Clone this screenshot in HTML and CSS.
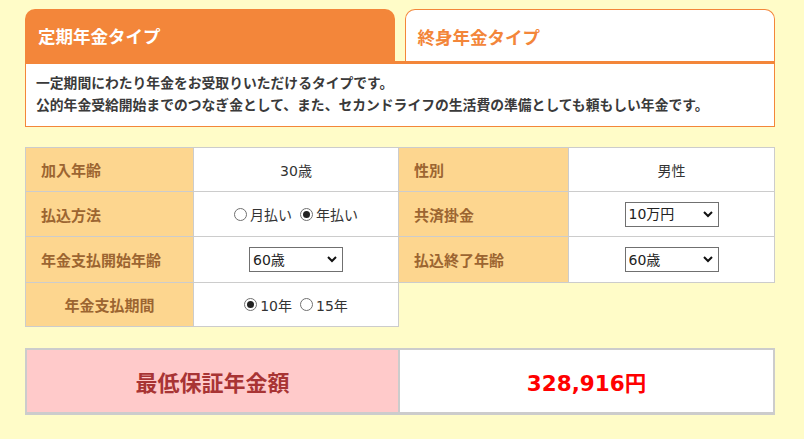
FILE: index.html
```html
<!DOCTYPE html>
<html lang="ja">
<head>
<meta charset="utf-8">
<title>年金シミュレーション</title>
<link rel="stylesheet" href="styles.css">
</head>
<body>
<div class="page">
  <div class="tabs">
    <div class="tab tab-active">定期年金タイプ</div>
    <div class="tab tab-idle">終身年金タイプ</div>
  </div>
  <div class="desc">
    <p>一定期間にわたり年金をお受取りいただけるタイプです。</p>
    <p>公的年金受給開始までのつなぎ金として、また、セカンドライフの生活費の準備としても頼もしい年金です。</p>
  </div>

  <div class="form-grid">
    <div class="cell label first">加入年齢</div>
    <div class="cell value">30歳</div>
    <div class="cell label">性別</div>
    <div class="cell value">男性</div>

    <div class="cell label first">払込方法</div>
    <div class="cell value">
      <label class="opt"><input type="radio" name="pay" class="radio">月払い</label>
      <label class="opt"><input type="radio" name="pay" class="radio" checked>年払い</label>
    </div>
    <div class="cell label">共済掛金</div>
    <div class="cell value">
      <span class="sel-wrap">
        <select class="sel"><option>10万円</option></select>
        <svg class="chev" width="10" height="7" viewBox="0 0 10 7"><path d="M1 1 L5 5 L9 1" fill="none" stroke="#111" stroke-width="2"/></svg>
      </span>
    </div>

    <div class="cell label first">年金支払開始年齢</div>
    <div class="cell value">
      <span class="sel-wrap">
        <select class="sel"><option>60歳</option></select>
        <svg class="chev" width="10" height="7" viewBox="0 0 10 7"><path d="M1 1 L5 5 L9 1" fill="none" stroke="#111" stroke-width="2"/></svg>
      </span>
    </div>
    <div class="cell label">払込終了年齢</div>
    <div class="cell value">
      <span class="sel-wrap">
        <select class="sel"><option>60歳</option></select>
        <svg class="chev" width="10" height="7" viewBox="0 0 10 7"><path d="M1 1 L5 5 L9 1" fill="none" stroke="#111" stroke-width="2"/></svg>
      </span>
    </div>

    <div class="cell label first center">年金支払期間</div>
    <div class="cell value">
      <label class="opt"><input type="radio" name="term" class="radio" checked>10年</label>
      <label class="opt"><input type="radio" name="term" class="radio">15年</label>
    </div>
  </div>

  <div class="result">
    <div class="result-label">最低保証年金額</div>
    <div class="result-value">328,916円</div>
  </div>
</div>
</body>
</html>
```

FILE: styles.css
```css
* { box-sizing: border-box; }

html, body {
  margin: 0;
  padding: 0;
  background: #fffcc8;
  font-family: "Noto Sans CJK JP", "Noto Sans", sans-serif;
  color: #333;
}

.page {
  width: 750px;
  margin-left: 25px;
  padding-top: 9px;
}

.tabs {
  display: flex;
  gap: 10px;
  height: 52px;
}

.tab {
  flex: 1;
  display: flex;
  align-items: center;
  font-size: 17.5px;
  font-weight: bold;
  border-radius: 10px 10px 0 0;
  padding-top: 1px;
}

.tab-active {
  background: #f3863a;
  color: #fff;
  padding-left: 13px;
}

.tab-idle {
  background: #fff;
  color: #f3863a;
  border: 1px solid #f3863a;
  border-bottom: none;
  padding-left: 12px;
}

.desc {
  background: #fff;
  border: 1px solid #f3863a;
  border-top: 3px solid #f3863a;
  padding: 7px 10px 10px;
  height: 66px;
}

.desc p {
  margin: 0;
  font-size: 13.8px;
  font-weight: bold;
  line-height: 22px;
  color: #3a3a3a;
  white-space: nowrap;
}

.form-grid {
  margin-top: 20px;
  display: grid;
  grid-template-columns: 169px 205px 170px 206px;
  grid-template-rows: 45px 45px 46px 44px;
}

.cell {
  display: flex;
  align-items: center;
  border-right: 1px solid #cccccc;
  border-bottom: 1px solid #cccccc;
}

.form-grid > .cell:nth-child(-n+4) {
  border-top: 1px solid #cccccc;
}

.cell.first {
  border-left: 1px solid #cccccc;
}

.label {
  background: #fdd68f;
  color: #9c6531;
  font-weight: bold;
  font-size: 15px;
  padding-left: 15px;
}

.label.center {
  justify-content: center;
  padding-left: 0;
}

.value {
  background: #fff;
  justify-content: center;
  font-family: "DejaVu Sans", "Noto Sans CJK JP", sans-serif;
  font-size: 14px;
  color: #333;
  gap: 8px;
}

.opt {
  display: inline-flex;
  align-items: center;
  font-size: 14px;
  color: #333;
}

.radio {
  appearance: none;
  -webkit-appearance: none;
  width: 13px;
  height: 13px;
  margin: 0 3px 0 0;
  border: 1px solid #707070;
  border-radius: 50%;
  background: #fff;
  position: relative;
}

.radio:checked::after {
  content: "";
  position: absolute;
  left: 2px;
  top: 2px;
  width: 7px;
  height: 7px;
  border-radius: 50%;
  background: #222;
}

.sel-wrap {
  position: relative;
  display: inline-block;
  width: 94px;
  height: 25px;
}

.sel {
  appearance: none;
  -webkit-appearance: none;
  width: 94px;
  height: 25px;
  border: 1px solid #707070;
  border-radius: 0;
  background: #fff;
  font-family: "DejaVu Sans", "Noto Sans CJK JP", sans-serif;
  font-size: 14px;
  color: #222;
  padding: 0 0 0 3px;
  margin: 0;
}

.chev {
  position: absolute;
  right: 6px;
  top: 9px;
  pointer-events: none;
}

.result {
  margin-top: 21px;
  display: grid;
  grid-template-columns: 373px 1fr;
  height: 67px;
  border: 2px solid #cccccc;
  border-bottom-width: 3px;
}

.result-label {
  background: #ffcaca;
  color: #a83434;
  font-size: 22px;
  font-weight: bold;
  display: flex;
  align-items: center;
  justify-content: center;
  border-right: 2px solid #cccccc;
}

.result-value {
  background: #fff;
  color: #ff0000;
  font-family: "DejaVu Sans", "Noto Sans CJK JP", sans-serif;
  font-size: 21.5px;
  font-weight: bold;
  display: flex;
  align-items: center;
  justify-content: center;
}
```
